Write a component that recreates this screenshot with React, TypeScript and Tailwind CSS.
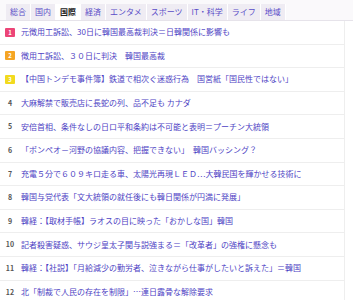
import React from 'react'

// ─── Data ──────────────────────────────────────────────────────────────────

const TABS = ['総合', '国内', '国際', '経済', 'エンタメ', 'スポーツ', 'IT・科学', 'ライフ', '地域']
const ACTIVE_TAB = '国際'

const ARTICLES = [
  '元徴用工訴訟、30日に韓国最高裁判決＝日韓関係に影響も',
  '徴用工訴訟、３０日に判決　韓国最高裁',
  '【中国トンデモ事件簿】鉄道で相次ぐ迷惑行為　国営紙「国民性ではない」',
  '大麻解禁で販売店に長蛇の列、品不足も カナダ',
  '安倍首相、条件なしの日ロ平和条約は不可能と表明＝プーチン大統領',
  '「ポンペオ－河野の協議内容、把握できない」　韓国バッシング？',
  '充電５分で６０９キロ走る車、太陽光再現ＬＥＤ…大韓民国を輝かせる技術に',
  '韓国与党代表「文大統領の就任後にも韓日関係が円満に発展」',
  '韓経：【取材手帳】ラオスの目に映った「おかしな国」韓国',
  '記者殺害疑惑、サウジ皇太子関与説強まる＝「改革者」の強権に懸念も',
  '韓経：【社説】「月給減少の勤労者、泣きながら仕事がしたいと訴えた」＝韓国',
  '北「制裁で人民の存在を制限」…連日露骨な解除要求',
]

function rankMark(pos: number) {
  if (pos === 1) return <span className="w-[10px] h-[9px] rounded-[1px] bg-[#ec4577] text-white text-[6px] font-bold leading-[9px] text-center">1</span>
  if (pos === 2) return <span className="w-[10px] h-[9px] rounded-[1px] bg-[#f5a524] text-white text-[6px] font-bold leading-[9px] text-center">2</span>
  if (pos === 3) return <span className="w-[10px] h-[9px] rounded-[1px] bg-[#f2da1e] text-white text-[6px] font-bold leading-[9px] text-center">3</span>
  return <span className="w-[10px] text-center text-[7px] font-bold text-[#555]">{pos}</span>
}

// ─── Component ─────────────────────────────────────────────────────────────

export default function App() {
  return (
    <div className="w-[353px] h-[300px] overflow-hidden bg-white font-['Noto_Sans_CJK_JP','Noto_Sans',sans-serif]">
      {/* Tabs */}
      <div className="flex pt-[4px] pl-[6px] border-b border-[#e6e3ea] bg-[#faf9fb]">
        {TABS.map((t) => (
          <div key={t}
            className={`h-[16px] px-1 border-r border-white text-[8px] leading-[16px] whitespace-nowrap ${
              t === ACTIVE_TAB ? 'bg-white text-[#222] font-bold' : 'bg-[#efecf3] text-[#5a4cc8]'
            }`}>
            {t}
          </div>
        ))}
      </div>

      {/* Ranking list */}
      <div className="w-[345px] border-r border-[#eeeeee]">
        {ARTICLES.map((title, i) => (
          <div key={i} className="h-[23.6px] flex items-center gap-[6px] pl-[5px] border-b border-[#eeeeee]">
            {rankMark(i + 1)}
            <span className="text-[8px] text-[#4e3fc4] whitespace-nowrap truncate">{title}</span>
          </div>
        ))}
      </div>
    </div>
  )
}
